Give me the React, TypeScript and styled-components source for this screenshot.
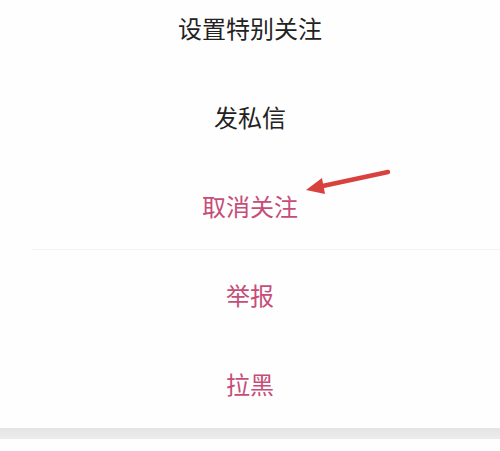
import React from "react"
import styled, { createGlobalStyle } from "styled-components"

const GlobalStyle = createGlobalStyle`
  html, body {
    margin: 0;
    padding: 0;
    background: #ffffff;
  }
  body {
    font-family: "Noto Sans CJK SC", "Noto Sans", sans-serif;
  }
`

const SSheet = styled.div`
  position: relative;
  width: 500px;
  height: 451px;
  overflow: hidden;
  background-color: #fefefe;
`

const SList = styled.ul`
  list-style: none;
  margin: -17px 0 0 0;
  padding: 0;
  display: flex;
  flex-direction: column;
`

const SItem = styled.li<{ $danger?: boolean; $divider?: boolean }>`
  height: 89px;
  display: flex;
  align-items: center;
  justify-content: center;
  font-size: 24px;
  line-height: 1;
  color: ${({ $danger }) => ($danger ? "#c64d78" : "#222222")};
  box-shadow: ${({ $divider }) => ($divider ? "inset 32px 0 0 #fefefe, inset 0 -1px 0 #f3f3f3" : "none")};
`

const SBand = styled.div`
  height: 11px;
  background: linear-gradient(#e4e4e4, #ececec);
`

const SArrow = styled.svg`
  position: absolute;
  left: 300px;
  top: 160px;
  width: 100px;
  height: 40px;
  pointer-events: none;
`

const items = [
  { label: "设置特别关注" },
  { label: "发私信" },
  { label: "取消关注", danger: true, divider: true },
  { label: "举报", danger: true },
  { label: "拉黑", danger: true },
]

const App = () => {
  return (
    <SSheet>
      <GlobalStyle />
      <SList>
        {items.map((item, index) => (
          <SItem key={index} $danger={item.danger} $divider={item.divider}>
            {item.label}
          </SItem>
        ))}
      </SList>
      <SBand />
      <SArrow viewBox="0 0 100 40">
        <line x1="88" y1="12" x2="18" y2="27" stroke="#d9413f" strokeWidth="4.5" strokeLinecap="round" />
        <polygon points="6,30 22,18 25,34" fill="#d9413f" />
      </SArrow>
    </SSheet>
  )
}

export default App
